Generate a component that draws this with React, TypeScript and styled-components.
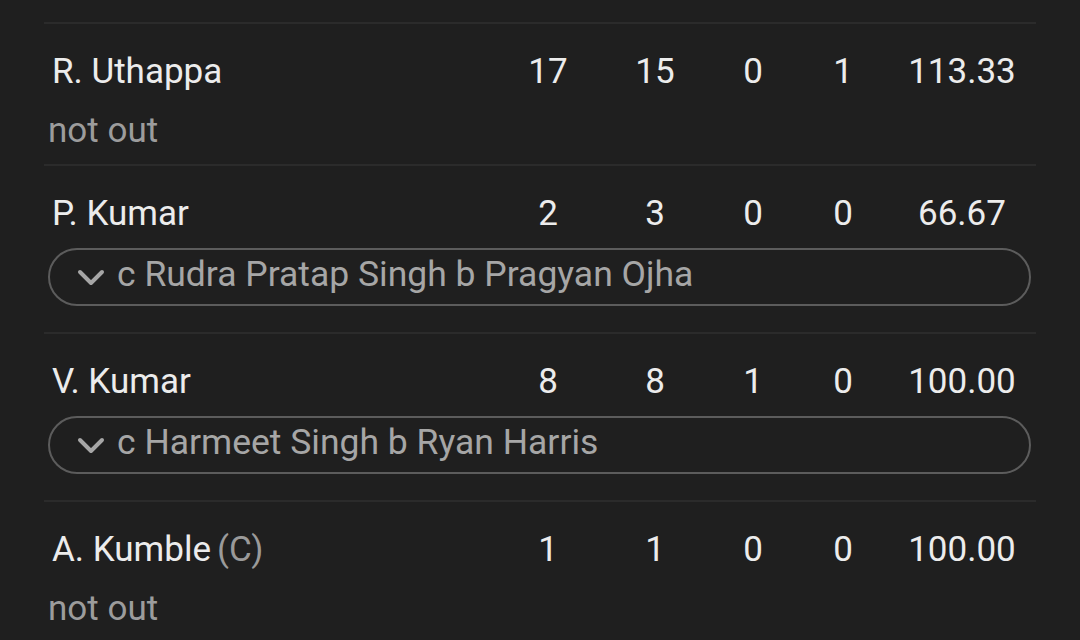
import React from "react";
import styled, { createGlobalStyle } from "styled-components";

const Global = createGlobalStyle`
  html, body { margin: 0; padding: 0; background: #1f1f1f; }
  body { font-family: Roboto, "Noto Sans", sans-serif; -webkit-font-smoothing: antialiased; }
`;

const Page = styled.div`
  width: 1080px;
  height: 640px;
  overflow: hidden;
  background: #1f1f1f;
  padding: 22px 44px 0 44px;
  box-sizing: border-box;
`;

const Row = styled.div`
  border-top: 2px solid #2b2b2b;
  padding: 28px 5px 13px 4px;
  display: flex;
  flex-direction: column;
`;

const Line = styled.div`
  display: grid;
  grid-template-columns: 450px 100px 114px 82px 98px 140px;
  align-items: center;
  height: 40px;
  font-size: 35px;
  line-height: 40px;
  color: #ececec;
`;

const Name = styled.div`
  padding-left: 4px;
  white-space: nowrap;
`;

const Captain = styled.span`
  color: #9a9a9a;
  margin-left: 6px;
`;

const Stat = styled.div`
  text-align: center;
`;

const NotOut = styled.div`
  margin-top: 19px;
  height: 40px;
  font-size: 35px;
  line-height: 40px;
  color: #9c9c9c;
`;

const Pill = styled.div`
  margin-top: 14px;
  margin-bottom: 13px;
  height: 58px;
  box-sizing: border-box;
  border: 2px solid #5c5c5c;
  border-radius: 29px;
  display: flex;
  align-items: center;
  padding-left: 27px;
  gap: 12px;
  font-size: 35.5px;
  color: #a6a6a6;
  white-space: nowrap;
`;

const PillText = styled.span`
  line-height: 40px;
  margin-bottom: 6px;
`;

const Chevron = () => (
  <svg width="28" height="20" viewBox="0 0 28 20">
    <path d="M3 5 L14 16 L25 5" fill="none" stroke="#a6a6a6" strokeWidth="4" strokeLinecap="round" strokeLinejoin="round" />
  </svg>
);

type Batter = {
  name: string;
  captain?: boolean;
  stats: string[];
  dismissal?: string;
};

const batters: Batter[] = [
  { name: "R. Uthappa", stats: ["17", "15", "0", "1", "113.33"] },
  { name: "P. Kumar", stats: ["2", "3", "0", "0", "66.67"], dismissal: "c Rudra Pratap Singh b Pragyan Ojha" },
  { name: "V. Kumar", stats: ["8", "8", "1", "0", "100.00"], dismissal: "c Harmeet Singh b Ryan Harris" },
  { name: "A. Kumble", captain: true, stats: ["1", "1", "0", "0", "100.00"] },
];

export default function App() {
  return (
    <>
      <Global />
      <Page>
        {batters.map((b) => (
          <Row key={b.name}>
            <Line>
              <Name>
                {b.name}
                {b.captain && <Captain>(C)</Captain>}
              </Name>
              {b.stats.map((s, i) => (
                <Stat key={i}>{s}</Stat>
              ))}
            </Line>
            {b.dismissal ? (
              <Pill>
                <Chevron />
                <PillText>{b.dismissal}</PillText>
              </Pill>
            ) : (
              <NotOut>not out</NotOut>
            )}
          </Row>
        ))}
      </Page>
    </>
  );
}
